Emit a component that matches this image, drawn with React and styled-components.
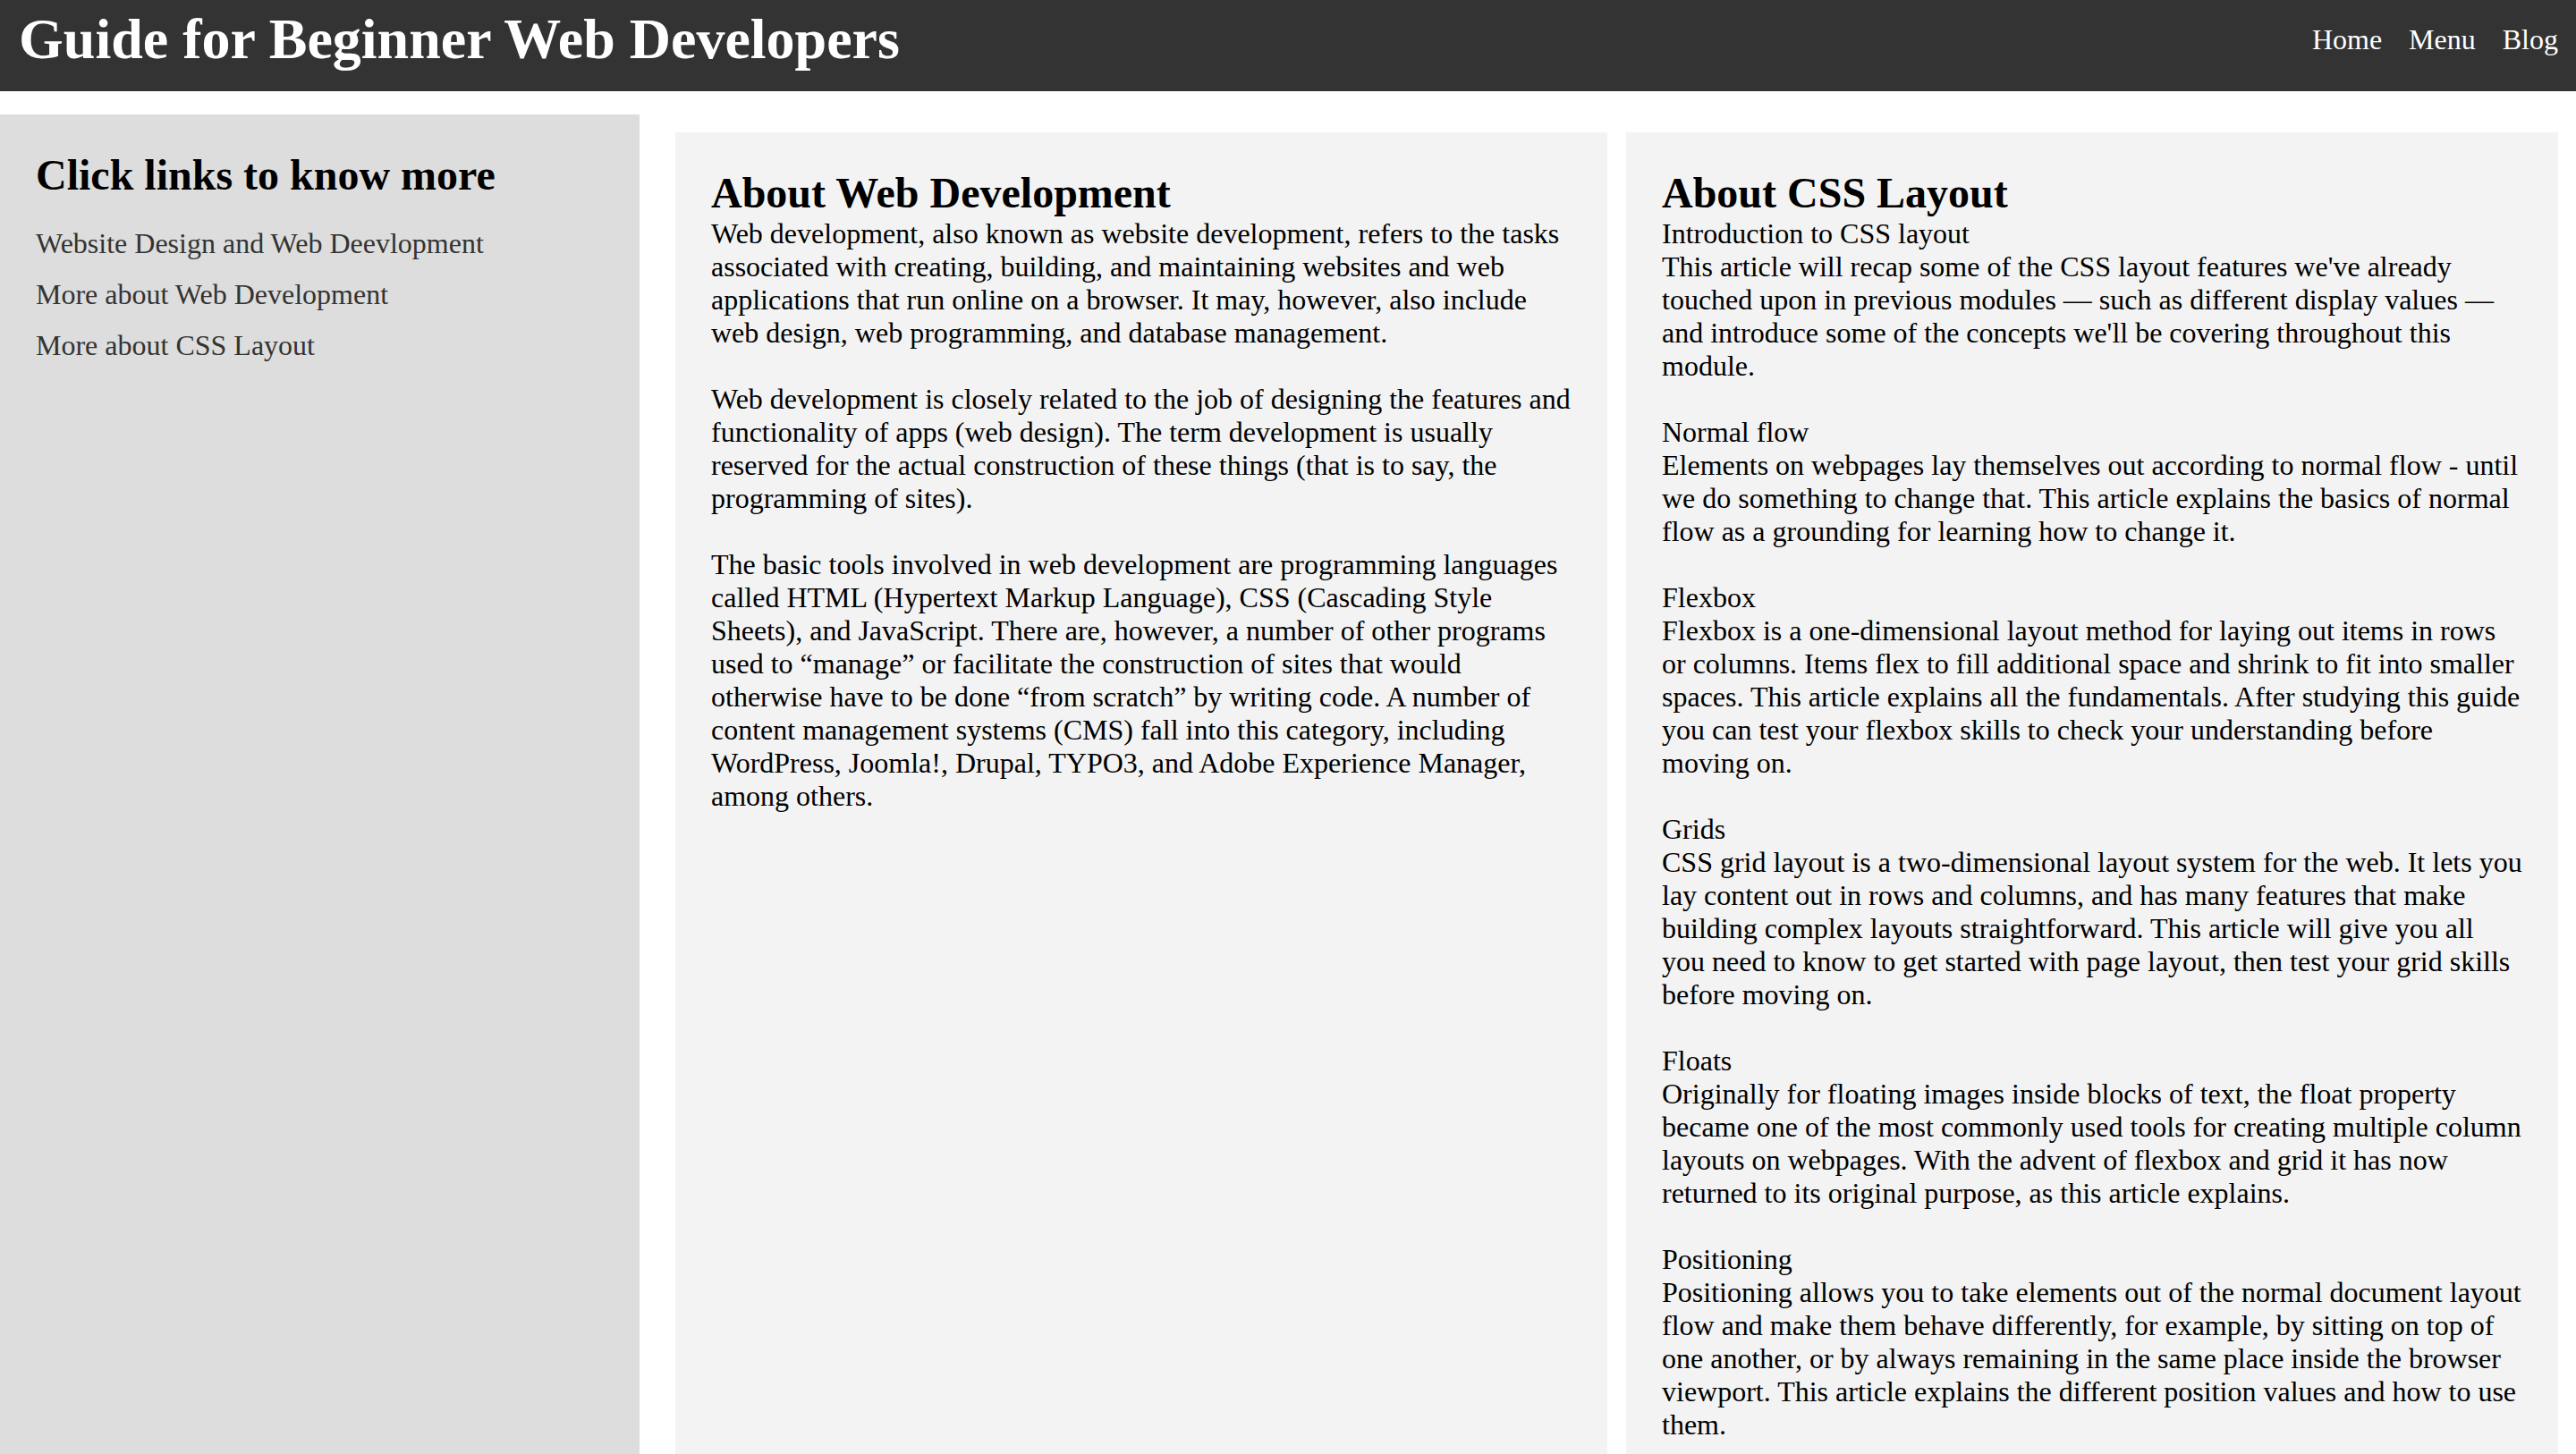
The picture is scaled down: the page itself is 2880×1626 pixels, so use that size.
import React from "react";
import styled, { createGlobalStyle } from "styled-components";

const GlobalStyle = createGlobalStyle`
  html, body {
    margin: 0;
    padding: 0;
    background: #ffffff;
  }
  body {
    font-family: "Liberation Serif", "Times New Roman", serif;
    font-size: 32px;
    line-height: 37px;
    color: #000000;
  }
  * { box-sizing: border-box; }
`;

const Page = styled.div`
  display: flex;
  flex-direction: column;
  min-height: 100vh;
`;

const Header = styled.header`
  display: flex;
  justify-content: space-between;
  align-items: flex-start;
  height: 102px;
  padding: 7px 20px 0 21px;
  background: #333333;
  color: #ffffff;
`;

const Title = styled.h1`
  margin: 0;
  font-size: 64px;
  line-height: 73.5px;
  font-weight: bold;
`;

const Nav = styled.nav`
  display: flex;
  gap: 30px;
  padding-top: 19px;
`;

const NavLink = styled.a`
  color: #ffffff;
  text-decoration: none;
  font-size: 32px;
  line-height: 37px;
`;

const Body = styled.div`
  display: flex;
  flex: 1;
  align-items: stretch;
`;

const Sidebar = styled.aside`
  width: 715px;
  flex-shrink: 0;
  margin-top: 26px;
  padding: 40px;
  background: #dddddd;
`;

const Heading = styled.h2`
  margin: 0 0 ${(p) => (p.$spaced ? "21px" : "0")};
  font-size: 48px;
  line-height: 55.2px;
  font-weight: bold;
`;

const LinkList = styled.ul`
  list-style: none;
  margin: 0;
  padding: 0;
`;

const LinkItem = styled.li`
  padding: 10px 0;
`;

const SideLink = styled.a`
  color: #333333;
  text-decoration: none;
`;

const Articles = styled.main`
  flex: 1;
  display: flex;
  gap: 21px;
  padding: 46px 20px 0 40px;
`;

const Article = styled.article`
  flex: 1;
  min-width: 0;
  padding: 40px;
  background: #f3f3f3;
`;

const Paragraph = styled.p`
  margin: 0 0 37px;
  &:last-child { margin-bottom: 0; }
`;

const Topic = styled.span`
  display: block;
`;

const sideLinks = [
  "Website Design and Web Deevlopment",
  "More about Web Development",
  "More about CSS Layout",
];

const webDev = [
  "Web development, also known as website development, refers to the tasks associated with creating, building, and maintaining websites and web applications that run online on a browser. It may, however, also include web design, web programming, and database management.",
  "Web development is closely related to the job of designing the features and functionality of apps (web design). The term development is usually reserved for the actual construction of these things (that is to say, the programming of sites).",
  "The basic tools involved in web development are programming languages called HTML (Hypertext Markup Language), CSS (Cascading Style Sheets), and JavaScript. There are, however, a number of other programs used to \u201cmanage\u201d or facilitate the construction of sites that would otherwise have to be done \u201cfrom scratch\u201d by writing code. A number of content management systems (CMS) fall into this category, including WordPress, Joomla!, Drupal, TYPO3, and Adobe Experience Manager, among others.",
];

const cssTopics = [
  {
    title: "Introduction to CSS layout",
    text: "This article will recap some of the CSS layout features we've already touched upon in previous modules \u2014 such as different display values \u2014 and introduce some of the concepts we'll be covering throughout this module.",
  },
  {
    title: "Normal flow",
    text: "Elements on webpages lay themselves out according to normal flow - until we do something to change that. This article explains the basics of normal flow as a grounding for learning how to change it.",
  },
  {
    title: "Flexbox",
    text: "Flexbox is a one-dimensional layout method for laying out items in rows or columns. Items flex to fill additional space and shrink to fit into smaller spaces. This article explains all the fundamentals. After studying this guide you can test your flexbox skills to check your understanding before moving on.",
  },
  {
    title: "Grids",
    text: "CSS grid layout is a two-dimensional layout system for the web. It lets you lay content out in rows and columns, and has many features that make building complex layouts straightforward. This article will give you all you need to know to get started with page layout, then test your grid skills before moving on.",
  },
  {
    title: "Floats",
    text: "Originally for floating images inside blocks of text, the float property became one of the most commonly used tools for creating multiple column layouts on webpages. With the advent of flexbox and grid it has now returned to its original purpose, as this article explains.",
  },
  {
    title: "Positioning",
    text: "Positioning allows you to take elements out of the normal document layout flow and make them behave differently, for example, by sitting on top of one another, or by always remaining in the same place inside the browser viewport. This article explains the different position values and how to use them.",
  },
];

export default function App() {
  return (
    <Page>
      <GlobalStyle />
      <Header>
        <Title>Guide for Beginner Web Developers</Title>
        <Nav>
          <NavLink href="#">Home</NavLink>
          <NavLink href="#">Menu</NavLink>
          <NavLink href="#">Blog</NavLink>
        </Nav>
      </Header>
      <Body>
        <Sidebar>
          <Heading $spaced>Click links to know more</Heading>
          <LinkList>
            {sideLinks.map((l) => (
              <LinkItem key={l}>
                <SideLink href="#">{l}</SideLink>
              </LinkItem>
            ))}
          </LinkList>
        </Sidebar>
        <Articles>
          <Article>
            <Heading>About Web Development</Heading>
            {webDev.map((t, i) => (
              <Paragraph key={i}>{t}</Paragraph>
            ))}
          </Article>
          <Article>
            <Heading>About CSS Layout</Heading>
            {cssTopics.map((t) => (
              <Paragraph key={t.title}>
                <Topic>{t.title}</Topic>
                {t.text}
              </Paragraph>
            ))}
          </Article>
        </Articles>
      </Body>
    </Page>
  );
}
